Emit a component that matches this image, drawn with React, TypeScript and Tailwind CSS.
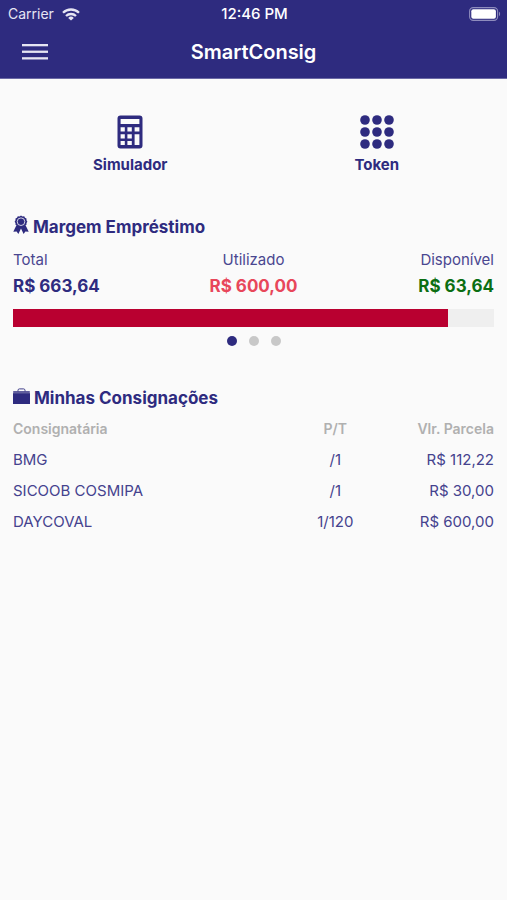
// App.tsx - SmartConsig home screen
// Header, shortcuts, loan margin summary and list of consignments

const shortcuts = [
  { id: "simulador", label: "Simulador", Icon: CalculatorIcon },
  { id: "token", label: "Token", Icon: KeypadIcon },
];

const margin = { total: 663.64, used: 600, available: 63.64 };

const consignments = [
  { name: "BMG", term: "/1", value: 112.22 },
  { name: "SICOOB COSMIPA", term: "/1", value: 30 },
  { name: "DAYCOVAL", term: "1/120", value: 600 },
];

const slides = ["Margem Empréstimo", "Margem Cartão", "Outras margens"];

function money(value: number) {
  return `R$ ${value.toFixed(2).replace(".", ",")}`;
}

function WifiIcon() {
  return (
    <svg width="18" height="13" viewBox="0 0 18 13" fill="none" stroke="currentColor" strokeWidth="2.3" aria-hidden="true">
      <path d="M1 4.8a11.4 11.4 0 0 1 16 0" />
      <path d="M4 8a7.2 7.2 0 0 1 10 0" />
      <path d="M9 12.6 6.2 9.9a4 4 0 0 1 5.6 0z" fill="currentColor" stroke="none" />
    </svg>
  );
}

function BatteryIcon() {
  return (
    <svg width="32" height="14" viewBox="0 0 32 14" aria-hidden="true">
      <rect x="0.6" y="0.6" width="28" height="12.8" rx="3.6" fill="none" stroke="#8e8cbd" strokeWidth="1.1" />
      <rect x="2.3" y="2.3" width="24.6" height="9.4" rx="2" fill="#fff" />
      <path d="M30 4.8c1.5.6 1.5 3.8 0 4.4z" fill="#8e8cbd" />
    </svg>
  );
}

function MenuIcon() {
  return (
    <svg width="26" height="16" viewBox="0 0 26 16" fill="#e6e5f3" aria-hidden="true">
      <rect y="0" width="26" height="2.3" />
      <rect y="6.6" width="26" height="2.3" />
      <rect y="13.2" width="26" height="2.3" />
    </svg>
  );
}

function CalculatorIcon() {
  return (
    <svg width="26" height="34" viewBox="0 0 26 34" aria-hidden="true">
      <path
        fill="currentColor"
        fillRule="evenodd"
        d="M3.5 0.5h19a3 3 0 0 1 3 3v27a3 3 0 0 1-3 3h-19a3 3 0 0 1-3-3v-27a3 3 0 0 1 3-3zM3.6 4v5h18.8V4zM3.6 12.2v4.2h4.2v-4.2zM10.4 12.2v4.2h4.4v-4.2zM17.6 12.2v4.2h4.8v-4.2zM3.6 19.2v4.2h4.2v-4.2zM10.4 19.2v4.2h4.4v-4.2zM17.6 19.2v10.9h4.8V19.2zM3.6 25.9v4.2h4.2v-4.2zM10.4 25.9v4.2h4.4v-4.2z"
      />
    </svg>
  );
}

function KeypadIcon() {
  return (
    <svg width="34" height="34" viewBox="0 0 34 34" fill="currentColor" aria-hidden="true">
      {[5, 17, 29].map((y) =>
        [5, 17, 29].map((x) => <circle key={`${x}-${y}`} cx={x} cy={y} r="4.8" />)
      )}
    </svg>
  );
}

function RibbonIcon() {
  return (
    <svg width="16" height="20" viewBox="0 0 16 20" aria-hidden="true">
      <path fill="currentColor" d="M3.4 10.2 0.3 16.8l3.3-.3 1.8 2.4L8 13.6l2.6 5.3 1.8-2.4 3.3.3-3.1-6.6z" />
      <path
        fill="currentColor"
        d="M8 .6l1.5.9 1.7-.2.8 1.5 1.5.8v1.7l.9 1.4-.9 1.4v1.7l-1.5.8-.8 1.5-1.7-.2-1.5.9-1.5-.9-1.7.2-.8-1.5-1.5-.8V8.1l-.9-1.4.9-1.4V3.6L4 2.8l.8-1.5 1.7.2z"
      />
      <circle cx="8" cy="6.7" r="3.8" fill="none" stroke="#fafafa" strokeWidth="0.8" />
    </svg>
  );
}

function BriefcaseIcon() {
  return (
    <svg width="17" height="20" viewBox="0 0 17 20" aria-hidden="true">
      <path d="M5 5.4V4.3c0-.9.5-1.4 1.4-1.4h4.2c.9 0 1.4.5 1.4 1.4v1.1" fill="none" stroke="currentColor" strokeWidth="0.9" />
      <path d="M0.2 5h16.6v2.5H0.2z" fill="currentColor" opacity="0.75" />
      <path d="M0 7.2h17V18H0z" fill="currentColor" />
    </svg>
  );
}

function Header() {
  return (
    <header className="bg-[#2e2b7f] text-white border-b border-[#6b69a5]">
      {/* Status bar */}
      <div className="grid grid-cols-3 items-center h-7 pl-2 pr-[6px] text-sm">
        <div className="flex items-center gap-2 text-[#e6e5f3]">
          <span>Carrier</span>
          <WifiIcon />
        </div>
        <span className="text-center text-[15px] leading-5 font-medium">12:46 PM</span>
        <div className="flex justify-end">
          <BatteryIcon />
        </div>
      </div>

      {/* Title bar */}
      <div className="grid grid-cols-[48px_1fr_48px] items-center h-[50px] px-[11px] pb-[2px]">
        <button type="button" aria-label="Menu" className="flex justify-center items-center h-10">
          <MenuIcon />
        </button>
        <h1 className="text-center text-xl font-semibold">SmartConsig</h1>
      </div>
    </header>
  );
}

function Shortcuts() {
  return (
    <nav className="grid grid-cols-2 px-[7px] pt-9">
      {shortcuts.map(({ id, label, Icon }) => (
        <button key={id} type="button" className="flex flex-col items-center gap-[6px]">
          <Icon />
          <span className="text-[15px] leading-5 font-bold">{label}</span>
        </button>
      ))}
    </nav>
  );
}

function MarginSummary() {
  return (
    <section className="px-[13px] pt-10">
      <h2 className="flex items-start gap-1 text-[17px] leading-6 font-bold">
        <RibbonIcon />
        Margem Empréstimo
      </h2>

      <dl className="grid grid-cols-3 mt-2 text-[15px] leading-[26px]">
        <div>
          <dt className="text-[#4a4790]">Total</dt>
          <dd className="text-[17px] font-bold">{money(margin.total)}</dd>
        </div>
        <div className="text-center">
          <dt className="text-[#4a4790]">Utilizado</dt>
          <dd className="text-[17px] font-bold text-[#e8475a]">{money(margin.used)}</dd>
        </div>
        <div className="text-right">
          <dt className="text-[#4a4790]">Disponível</dt>
          <dd className="text-[17px] font-bold text-[#0b6e12]">{money(margin.available)}</dd>
        </div>
      </dl>

      <div className="mt-[10px] h-[18px] bg-[#efefef]">
        <div
          className="h-full bg-[#b90030]"
          style={{ width: `${(margin.used / margin.total) * 100}%` }}
        />
      </div>

      {/* Carousel dots */}
      <div className="flex justify-center gap-3 mt-[9px]">
        {slides.map((slide, i) => (
          <button
            key={slide}
            type="button"
            aria-label={slide}
            className={`size-[10px] rounded-full ${i === 0 ? "bg-[#2e2b7f]" : "bg-[#c8c8c8]"}`}
          />
        ))}
      </div>
    </section>
  );
}

function Consignments() {
  return (
    <section className="px-[13px] pt-10">
      <h2 className="flex items-start gap-1 text-[17px] leading-6 font-bold">
        <BriefcaseIcon />
        Minhas Consignações
      </h2>

      <table className="w-full mt-1 table-fixed text-[15px] leading-5">
        <thead>
          <tr className="h-[30px] text-sm leading-5 text-[#b0b0b0]">
            <th className="w-[60%] text-left font-semibold">Consignatária</th>
            <th className="w-[14%] text-center font-semibold">P/T</th>
            <th className="text-right font-semibold">Vlr. Parcela</th>
          </tr>
        </thead>
        <tbody className="text-[#45428e]">
          {consignments.map((item) => (
            <tr key={item.name} className="h-[31px]">
              <td>{item.name}</td>
              <td className="text-center">{item.term}</td>
              <td className="text-right">{money(item.value)}</td>
            </tr>
          ))}
        </tbody>
      </table>
    </section>
  );
}

export default function App() {
  return (
    <div className="min-h-screen bg-[#fafafa] text-[#2e2b7f] font-['Inter',sans-serif]">
      <Header />
      <main>
        <Shortcuts />
        <MarginSummary />
        <Consignments />
      </main>
    </div>
  );
}
